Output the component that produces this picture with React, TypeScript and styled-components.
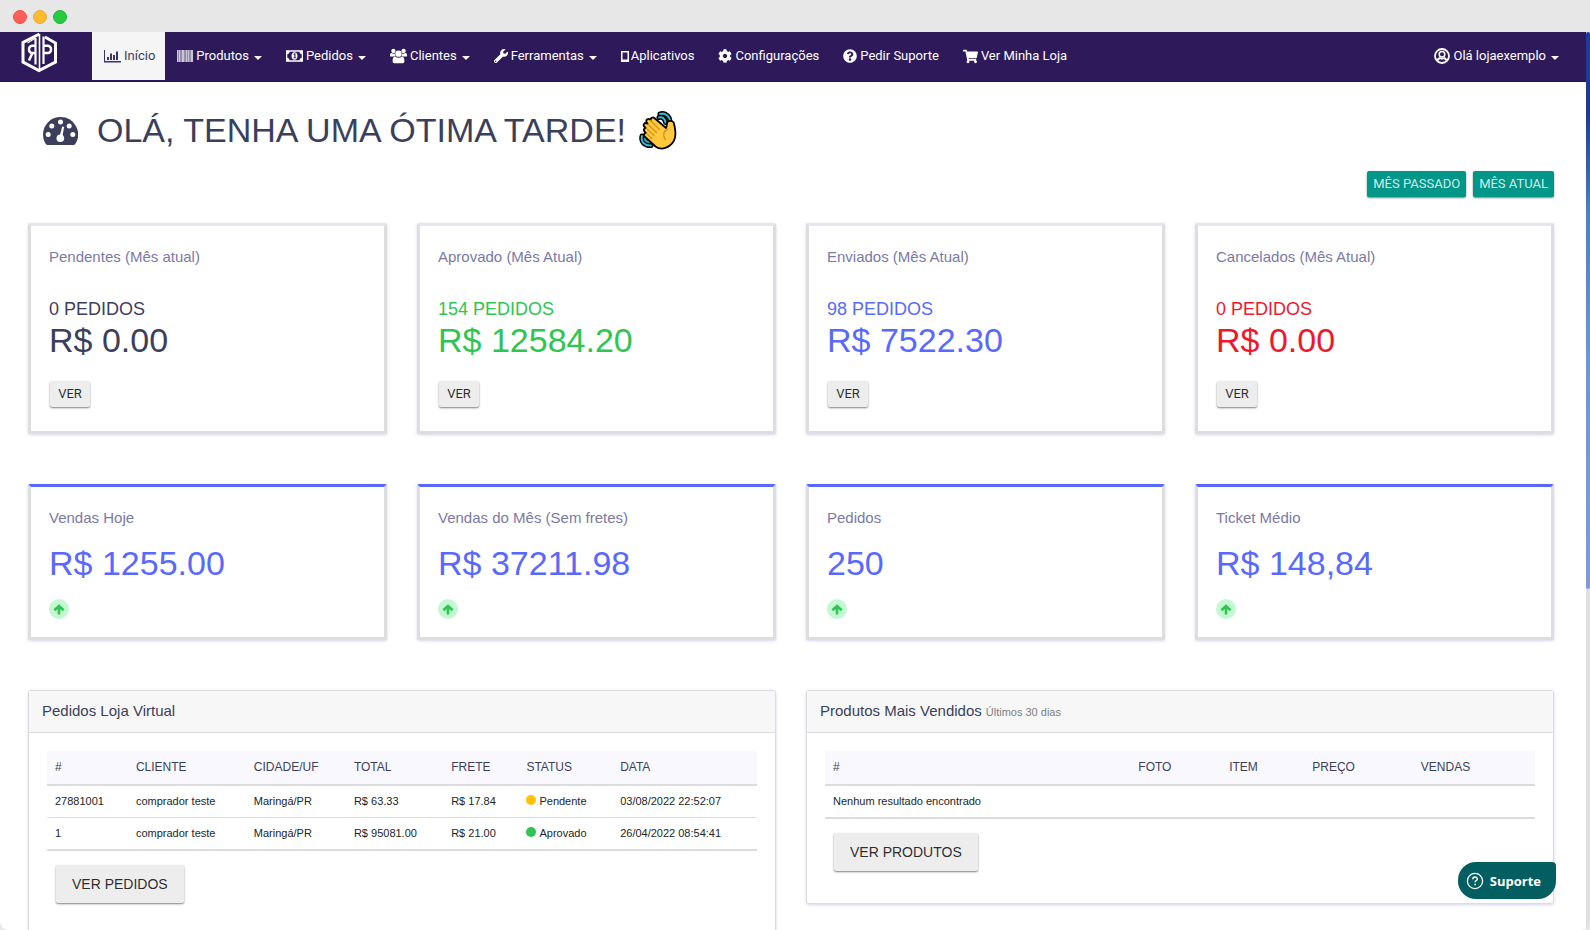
import React from "react";
import styled, { createGlobalStyle, css } from "styled-components";
import { FaWrench, FaCog, FaQuestionCircle, FaShoppingCart } from "react-icons/fa";

const sans = `"Liberation Sans", Arial, sans-serif`;
const roboto = `Roboto, "Liberation Sans", sans-serif`;

const colors = {
  ink: "#3b3f5c",
  muted: "#7a79a8",
  blue: "#5969ff",
  green: "#2ec551",
  red: "#ef172c",
  yellow: "#ffc108",
  line: "#dcdcdf",
};

const GlobalStyle = createGlobalStyle`
  * { box-sizing: border-box; }
  body { margin: 0; background: #e7e7e7; font-family: ${sans}; color: ${colors.ink}; }
  h1, h2, p { margin: 0; font-weight: 400; }
  a { color: inherit; text-decoration: none; }
`;

/* Window frame */
const BrowserWindow = styled.div`
  display: flex;
  flex-direction: column;
  height: 100vh;
  overflow: hidden;
  background: #e7e7e7;
  border-radius: 8px;
`;

const TitleBar = styled.div`
  display: flex;
  align-items: center;
  gap: 6px;
  flex: none;
  height: 32px;
  padding: 2px 13px 0;
`;

const Light = styled.span<{ $fill: string; $edge: string }>`
  width: 14px;
  height: 14px;
  border-radius: 50%;
  background: ${(p) => p.$fill};
  border: 1px solid ${(p) => p.$edge};
`;

const Viewport = styled.div`
  display: flex;
  flex: 1;
  min-height: 0;
`;

const Page = styled.div`
  flex: 1;
  min-width: 0;
  overflow: hidden;
  background: #fff;
  border-bottom-left-radius: 8px;
`;

const ScrollTrack = styled.div`
  flex: none;
  width: 4px;
  background: #dfdfe1;
`;

const ScrollThumb = styled.div`
  height: 62%;
  border-radius: 2px;
  background: linear-gradient(#22399a 0%, #1f3a9c 15%, #4a80c4 32%, #7096d6 60%, #7f9bdc 100%);
`;

/* Navigation */
const NavBar = styled.nav`
  display: flex;
  align-items: flex-start;
  height: 50px;
  padding: 0 15px 0 20px;
  background: #2e1a5b;
  border-bottom: 1px solid #22124a;
  font-family: ${roboto};
`;

const Brand = styled.a`
  display: block;
  width: 72px;
  height: 41px;
`;

const NavLink = styled.a<{ $active?: boolean; $tight?: boolean }>`
  display: flex;
  align-items: center;
  gap: ${(p) => (p.$tight ? 2 : 3)}px;
  height: 48px;
  padding: 0 12px;
  font-size: 13px;
  line-height: 20px;
  color: #fff;
  white-space: nowrap;
  svg { flex: none; }
  ${(p) =>
    p.$active &&
    css`
      padding: 0 10px 0 12px;
      background: #f5f5f5;
      color: ${colors.ink};
    `}
`;

const Caret = styled.span`
  margin-left: 2px;
  margin-top: 3px;
  border: 4px solid transparent;
  border-top-color: currentColor;
  border-bottom: 0;
`;

const Spacer = styled.div`
  flex: 1;
`;

/* Content */
const Content = styled.main`
  padding: 23px 32px 40px 28px;
`;

const Greeting = styled.header`
  display: flex;
  align-items: center;
  height: 50px;
  padding-left: 15px;
`;

const GreetingText = styled.h1`
  margin: 0 13px 0 19px;
  font-size: 34px;
  line-height: 40px;
  white-space: nowrap;
`;

const Toolbar = styled.div`
  display: flex;
  justify-content: flex-end;
  gap: 7px;
  margin: 16px 0 26px;
`;

const Button = styled.button<{ $primary?: boolean; $large?: boolean }>`
  min-width: 40px;
  height: ${(p) => (p.$large ? 38 : 26)}px;
  padding: 0 ${(p) => (p.$large ? 16 : 6)}px;
  border: 0;
  border-radius: 2px;
  background: ${(p) => (p.$primary ? "#009688" : "#ededed")};
  color: ${(p) => (p.$primary ? "rgba(255, 255, 255, 0.84)" : "rgba(0, 0, 0, 0.84)")};
  font-family: ${(p) => (p.$large ? sans : roboto)};
  font-size: ${(p) => (p.$large ? 14 : 13)}px;
  line-height: 20px;
  box-shadow: 0 1px 2px rgba(0, 0, 0, 0.5);
  cursor: pointer;
`;

const CardGrid = styled.section`
  display: grid;
  grid-template-columns: repeat(4, 1fr);
  gap: 30px;
  margin-bottom: 50px;
`;

const Card = styled.article<{ $accent?: boolean }>`
  padding: 19px 18px ${(p) => (p.$accent ? 18 : 24)}px;
  border: 3px solid #dedede;
  border-top-color: ${(p) => (p.$accent ? colors.blue : "#e6e5f1")};
  border-radius: 2px;
  background: #fff;
  box-shadow: 0 1px 3px rgba(90, 85, 170, 0.25);
`;

const CardTitle = styled.h2`
  font-size: 15px;
  line-height: 24px;
  color: ${colors.muted};
`;

const Count = styled.p<{ $color: string }>`
  margin-top: 29px;
  font-size: 18px;
  line-height: 22px;
  color: ${(p) => p.$color};
`;

const Amount = styled.p<{ $color: string; $spaced?: boolean }>`
  margin-top: ${(p) => (p.$spaced ? 13 : 0)}px;
  font-size: 34px;
  line-height: 40px;
  white-space: nowrap;
  color: ${(p) => p.$color};
`;

const CardAction = styled.div`
  display: flex;
  margin-top: 21px;
  padding-left: 1px;
`;

const Trend = styled.span`
  display: flex;
  align-items: center;
  justify-content: center;
  width: 20px;
  height: 20px;
  margin-top: 16px;
  border-radius: 50%;
  background: #c3f8d2;
`;

const PanelGrid = styled.section`
  display: grid;
  grid-template-columns: repeat(2, 1fr);
  gap: 30px;
  align-items: start;
`;

const Panel = styled.article<{ $tall?: boolean }>`
  min-height: ${(p) => (p.$tall ? 300 : 0)}px;
  border: 1px solid ${colors.line};
  border-radius: 3px;
  background: #fff;
  box-shadow: 0 1px 3px rgba(90, 85, 170, 0.25);
`;

const PanelHeader = styled.header`
  display: flex;
  align-items: baseline;
  gap: 4px;
  height: 42px;
  padding: 8px 13px;
  background: #f7f7f7;
  border-bottom: 1px solid ${colors.line};
`;

const PanelTitle = styled.h2`
  font-size: 15px;
  line-height: 24px;
`;

const PanelNote = styled.small`
  font-size: 11px;
  color: #808080;
`;

const PanelBody = styled.div`
  padding: 18px 18px 32px;
`;

const Table = styled.table`
  width: 100%;
  table-layout: fixed;
  border-collapse: separate;
  border-spacing: 0;
  border-bottom: 1px solid ${colors.line};
  white-space: nowrap;
  text-align: left;
`;

const Th = styled.th<{ $width: string }>`
  width: ${(p) => p.$width};
  height: 35px;
  padding: 0 8px 2px;
  background: #f9f8ff;
  border-bottom: 2px solid ${colors.line};
  font-size: 12px;
  font-weight: 400;
`;

const Td = styled.td`
  height: 32px;
  padding: 0 8px 2px;
  border-bottom: 1px solid ${colors.line};
  font-size: 11px;
  line-height: 16px;
  color: #212529;
`;

const Status = styled.span`
  display: flex;
  align-items: center;
  gap: 3px;
`;

const Dot = styled.span<{ $color: string }>`
  width: 10px;
  height: 10px;
  margin-bottom: 2px;
  border-radius: 50%;
  background: ${(p) => p.$color};
`;

const PanelAction = styled.div`
  display: flex;
  padding: 14px 9px 0;
`;

const SupportButton = styled.button`
  position: fixed;
  right: 34px;
  bottom: 31px;
  display: flex;
  align-items: center;
  gap: 6px;
  height: 37px;
  padding: 0 15px 0 8px;
  border: 0;
  border-radius: 18px 4px 18px 18px;
  background: #035e61;
  color: #fff;
  font-family: "Open Sans", "Noto Sans", sans-serif;
  font-size: 13px;
  font-weight: 700;
  line-height: 20px;
  cursor: pointer;
`;

/* Drawings */
const Logo = () => (
  <svg width="38" height="41" viewBox="0 0 38 41" fill="none" stroke="#fff">
    <path d="M19.500 2L3 10.500V30L19 38.600L35.500 30V11L25 5" strokeWidth="3" />
    <path d="M19.500 2V37" strokeWidth="1.600" />
    <path d="M15.500 6L7.500 11" strokeWidth="1.200" />
    <path d="M15.500 6V32.500" strokeWidth="2.200" />
    <path d="M15 13.700H12.500a3.500 3.500 0 00-3.500 3.500v.6a3.200 3.200 0 003.200 3.200H15M12.200 21.500L9 28.500" strokeWidth="2.500" />
    <path d="M23.500 4.500V32" strokeWidth="2.200" />
    <path d="M23.500 13.700H27.500a3.500 3.500 0 013.500 3.500v.6a3.200 3.200 0 01-3.200 3.200H23.500" strokeWidth="2.500" />
  </svg>
);

const ChartIcon = () => (
  <svg width="17" height="14" viewBox="0 0 17 14" fill="#3b3270">
    <path d="M0 1h1v11h16v1.400H0zM3 8h2v3H3zM6 4.500h2V11H6zM9 6h2v5H9zM12 2.500h2V11h-2z" />
  </svg>
);

const BarcodeIcon = () => (
  <svg width="16" height="13" viewBox="0 0 16 13">
    <path fill="#fff" fillOpacity=".5" d="M0 0h16v12H0z" />
    <path fill="#fff" fillOpacity=".5" d="M0 0h1v12H0zM2 0h1v12H2zM5 0h2v12H5zM9 0h1v12H9zM11 0h1v12h-1zM14 0h2v12h-2z" />
  </svg>
);

const MoneyIcon = () => (
  <svg width="17" height="12" viewBox="0 0 18 12">
    <path fill="#fff" fillRule="evenodd" d="M0 0h18v12H0zM3.800 1.400A2.400 2.400 0 011.400 3.800v4.400a2.400 2.400 0 012.400 2.400h10.400a2.400 2.400 0 012.400-2.400V3.800a2.400 2.400 0 01-2.400-2.400z" />
    <ellipse cx="9" cy="6" rx="3.100" ry="4" fill="#fff" />
    <path fill="#2e1a5b" d="M8 4.200L9.200 3.200h.8v4.400h.8v.9H7.800v-.9h1V4.700L8 5z" />
  </svg>
);

const GroupIcon = () => (
  <svg width="17" height="16" viewBox="0 0 18 17" fill="#fff">
    <circle cx="3.600" cy="3.200" r="2.300" />
    <circle cx="14.400" cy="3.200" r="2.300" />
    <path d="M0 9V7.400C0 6 .8 5.400 1.800 5.400c1 .7 2.400.8 3.200.4.1 1.300.3 2.300 1 3.200zM18 9V7.400c0-1.400-.8-2-1.800-2-1 .7-2.400.8-3.200.4-.1 1.300-.3 2.300-1 3.200z" />
    <circle cx="9" cy="6" r="3.400" />
    <path d="M5.400 9.300c-1.900 0-2.700 1.700-2.700 4.400 0 1.700.9 2.500 2.400 2.500h7.800c1.500 0 2.400-.8 2.400-2.500 0-2.700-.8-4.400-2.700-4.400-1.900 1.500-5.300 1.500-7.200 0z" />
  </svg>
);

const PhoneIcon = () => (
  <svg width="8" height="13" viewBox="0 0 8 13">
    <path fill="#fff" fillRule="evenodd" d="M0 1h8v11H0zM1.500 2.500v7h5v-7z" />
  </svg>
);

const UserIcon = () => (
  <svg width="16" height="16" viewBox="0 0 16 16" fill="none" stroke="#fff">
    <circle cx="8" cy="8" r="7" strokeWidth="1.800" />
    <circle cx="8" cy="6.300" r="2.800" strokeWidth="1.500" />
    <path fill="#fff" d="M2.800 12c.8-1.800 1.800-2.700 3-2.700 1.300.9 3.100.9 4.400 0 1.200 0 2.200.9 3 2.700l-1.200 1c-.6-1-1.200-1.600-2-2-1.300.6-2.700.6-4 0-.8.4-1.400 1-2 2z" strokeWidth=".3" />
  </svg>
);

const GaugeIcon = () => (
  <svg width="35" height="30" viewBox="0 -2 35 30">
    <path fill={colors.ink} d="M17.500 0A17.500 17.500 0 000 17.500c0 3.500 1 6.600 2.600 9.300.4.700 1 1.200 1.700 1.200h26.400c.7 0 1.300-.5 1.700-1.200A17.500 17.500 0 0017.500 0z" />
    <g fill="#fff">
      <circle cx="5.200" cy="17.500" r="2.500" />
      <circle cx="8.800" cy="8.900" r="2.500" />
      <circle cx="17.500" cy="5" r="2.500" />
      <circle cx="26.200" cy="8.900" r="2.500" />
      <circle cx="29.800" cy="17.500" r="2.500" />
      <circle cx="17.300" cy="21.300" r="3.800" />
      <path d="M19.200 9.600l1.900.4-1.900 10.500-2.700-.6z" />
    </g>
  </svg>
);

const WaveIcon = () => (
  <svg width="38" height="39" viewBox="0 0 38 39" strokeLinecap="round" strokeLinejoin="round">
    <g fill="none">
      <path d="M21 3c5-1.500 10 2 10 8M20 6.500c3.500-1 6 1.500 6.500 5M3 25c-1.500 6 3 10 9 9.500M6 25.500c-.5 4 2 6 5.500 5.500" stroke="#000" strokeWidth="5" />
      <path d="M21 3c5-1.500 10 2 10 8M20 6.500c3.500-1 6 1.500 6.500 5M3 25c-1.500 6 3 10 9 9.500M6 25.500c-.5 4 2 6 5.500 5.500" stroke="#35b5d0" strokeWidth="2" />
    </g>
    <path
      fill="#ffc83d"
      stroke="#000"
      strokeWidth="1.800"
      d="M5 13c1-1.400 2.500-1.200 3.600-.2L7.500 11c-1-2 1.500-4 3.300-2.600l1 .8c-.6-2 1.900-3.600 3.600-2.200L27 17c.8-2 .8-3.600 1.200-5.400.8-2.400 5-2.400 6.500 0 .8 2 .9 4 1.300 6.400.9 5 1 8.500-1.500 12.500-4 6-12 9.500-18 5L5.500 25.500c-1.400-1.500-.3-3.500 1.500-3.300l-1.200-1.400C4 19 5 17 6.700 17l-1.200-1.200C4.500 15 4.400 14 5 13z"
    />
    <path fill="none" stroke="#d8951c" strokeWidth="1.400" d="M9 13.500l8.500 8M11.500 9.500l9 9M7.500 17.500l7.500 7M7.500 22.500l5.500 5M29 18c-5 2-5.500 7-2.500 10.500" />
  </svg>
);

const ArrowUpIcon = () => (
  <svg width="12" height="11" viewBox="0 0 12 11" fill="none" stroke="#2ec551" strokeWidth="2.600">
    <path d="M6 10.500V2M1.400 6.300L6 2l4.600 4.300" />
  </svg>
);

const HelpIcon = () => (
  <svg width="18" height="18" viewBox="0 0 18 18" fill="none" stroke="#fff" strokeWidth="1.300">
    <circle cx="9" cy="9" r="7.600" />
    <path d="M6.800 7.200c0-3 4.500-2.800 4.500-.3 0 1.600-2.200 1.600-2.200 3.300M9.100 11.700v1.500" strokeWidth="1.500" />
  </svg>
);

/* Data */
const navItems = [
  { label: "Início", icon: <ChartIcon />, active: true },
  { label: "Produtos", icon: <BarcodeIcon />, menu: true },
  { label: "Pedidos", icon: <MoneyIcon />, menu: true },
  { label: "Clientes", icon: <GroupIcon />, menu: true },
  { label: "Ferramentas", icon: <FaWrench size={14} />, menu: true },
  { label: "Aplicativos", icon: <PhoneIcon />, tight: true },
  { label: "Configurações", icon: <FaCog size={14} /> },
  { label: "Pedir Suporte", icon: <FaQuestionCircle size={14} /> },
  { label: "Ver Minha Loja", icon: <FaShoppingCart size={15} /> },
];

const statusCards = [
  { title: "Pendentes (Mês atual)", count: "0 PEDIDOS", amount: "R$ 0.00", color: colors.ink },
  { title: "Aprovado (Mês Atual)", count: "154 PEDIDOS", amount: "R$ 12584.20", color: colors.green },
  { title: "Enviados (Mês Atual)", count: "98 PEDIDOS", amount: "R$ 7522.30", color: colors.blue },
  { title: "Cancelados (Mês Atual)", count: "0 PEDIDOS", amount: "R$ 0.00", color: colors.red },
];

const salesCards = [
  { title: "Vendas Hoje", amount: "R$ 1255.00" },
  { title: "Vendas do Mês (Sem fretes)", amount: "R$ 37211.98" },
  { title: "Pedidos", amount: "250" },
  { title: "Ticket Médio", amount: "R$ 148,84" },
];

const orderColumns = [
  ["#", "11.4%"],
  ["CLIENTE", "16.6%"],
  ["CIDADE/UF", "14.1%"],
  ["TOTAL", "13.7%"],
  ["FRETE", "10.6%"],
  ["STATUS", "13.2%"],
  ["DATA", "20.4%"],
];

const orders = [
  { id: "27881001", client: "comprador teste", city: "Maringá/PR", total: "R$ 63.33", freight: "R$ 17.84", status: "Pendente", color: colors.yellow, date: "03/08/2022 22:52:07" },
  { id: "1", client: "comprador teste", city: "Maringá/PR", total: "R$ 95081.00", freight: "R$ 21.00", status: "Aprovado", color: colors.green, date: "26/04/2022 08:54:41" },
];

const productColumns = [
  ["#", "43%"],
  ["FOTO", "12.8%"],
  ["ITEM", "11.7%"],
  ["PREÇO", "15.3%"],
  ["VENDAS", "17.2%"],
];

const HeadRow = ({ columns }: { columns: string[][] }) => (
  <thead>
    <tr>
      {columns.map(([name, width]) => (
        <Th key={name} scope="col" $width={width}>
          {name}
        </Th>
      ))}
    </tr>
  </thead>
);

export default function App() {
  return (
    <>
      <GlobalStyle />
      <BrowserWindow>
        <TitleBar>
          <Light $fill="#ff5f57" $edge="#f04d46" />
          <Light $fill="#ffbd2e" $edge="#eda63a" />
          <Light $fill="#28ca42" $edge="#1fb436" />
        </TitleBar>
        <Viewport>
          <Page>
            <NavBar>
              <Brand href="#" aria-label="Painel">
                <Logo />
              </Brand>
              {navItems.map((item) => (
                <NavLink key={item.label} href="#" $active={item.active} $tight={item.tight}>
                  {item.icon}
                  {item.label}
                  {item.menu && <Caret />}
                </NavLink>
              ))}
              <Spacer />
              <NavLink href="#">
                <UserIcon />
                Olá lojaexemplo
                <Caret />
              </NavLink>
            </NavBar>
            <Content>
              <Greeting>
                <GaugeIcon />
                <GreetingText>OLÁ, TENHA UMA ÓTIMA TARDE!</GreetingText>
                <WaveIcon />
              </Greeting>
              <Toolbar>
                <Button $primary>MÊS PASSADO</Button>
                <Button $primary>MÊS ATUAL</Button>
              </Toolbar>
              <CardGrid>
                {statusCards.map((card) => (
                  <Card key={card.title}>
                    <CardTitle>{card.title}</CardTitle>
                    <Count $color={card.color}>{card.count}</Count>
                    <Amount $color={card.color}>{card.amount}</Amount>
                    <CardAction>
                      <Button>VER</Button>
                    </CardAction>
                  </Card>
                ))}
              </CardGrid>
              <CardGrid>
                {salesCards.map((card) => (
                  <Card key={card.title} $accent>
                    <CardTitle>{card.title}</CardTitle>
                    <Amount $color={colors.blue} $spaced>
                      {card.amount}
                    </Amount>
                    <Trend>
                      <ArrowUpIcon />
                    </Trend>
                  </Card>
                ))}
              </CardGrid>
              <PanelGrid>
                <Panel $tall>
                  <PanelHeader>
                    <PanelTitle>Pedidos Loja Virtual</PanelTitle>
                  </PanelHeader>
                  <PanelBody>
                    <Table>
                      <HeadRow columns={orderColumns} />
                      <tbody>
                        {orders.map((o) => (
                          <tr key={o.id}>
                            <Td>{o.id}</Td>
                            <Td>{o.client}</Td>
                            <Td>{o.city}</Td>
                            <Td>{o.total}</Td>
                            <Td>{o.freight}</Td>
                            <Td>
                              <Status>
                                <Dot $color={o.color} />
                                {o.status}
                              </Status>
                            </Td>
                            <Td>{o.date}</Td>
                          </tr>
                        ))}
                      </tbody>
                    </Table>
                    <PanelAction>
                      <Button $large>VER PEDIDOS</Button>
                    </PanelAction>
                  </PanelBody>
                </Panel>
                <Panel>
                  <PanelHeader>
                    <PanelTitle>Produtos Mais Vendidos</PanelTitle>
                    <PanelNote>Últimos 30 dias</PanelNote>
                  </PanelHeader>
                  <PanelBody>
                    <Table>
                      <HeadRow columns={productColumns} />
                      <tbody>
                        <tr>
                          <Td colSpan={5}>Nenhum resultado encontrado</Td>
                        </tr>
                      </tbody>
                    </Table>
                    <PanelAction>
                      <Button $large>VER PRODUTOS</Button>
                    </PanelAction>
                  </PanelBody>
                </Panel>
              </PanelGrid>
            </Content>
          </Page>
          <ScrollTrack>
            <ScrollThumb />
          </ScrollTrack>
        </Viewport>
      </BrowserWindow>
      <SupportButton>
        <HelpIcon />
        Suporte
      </SupportButton>
    </>
  );
}
